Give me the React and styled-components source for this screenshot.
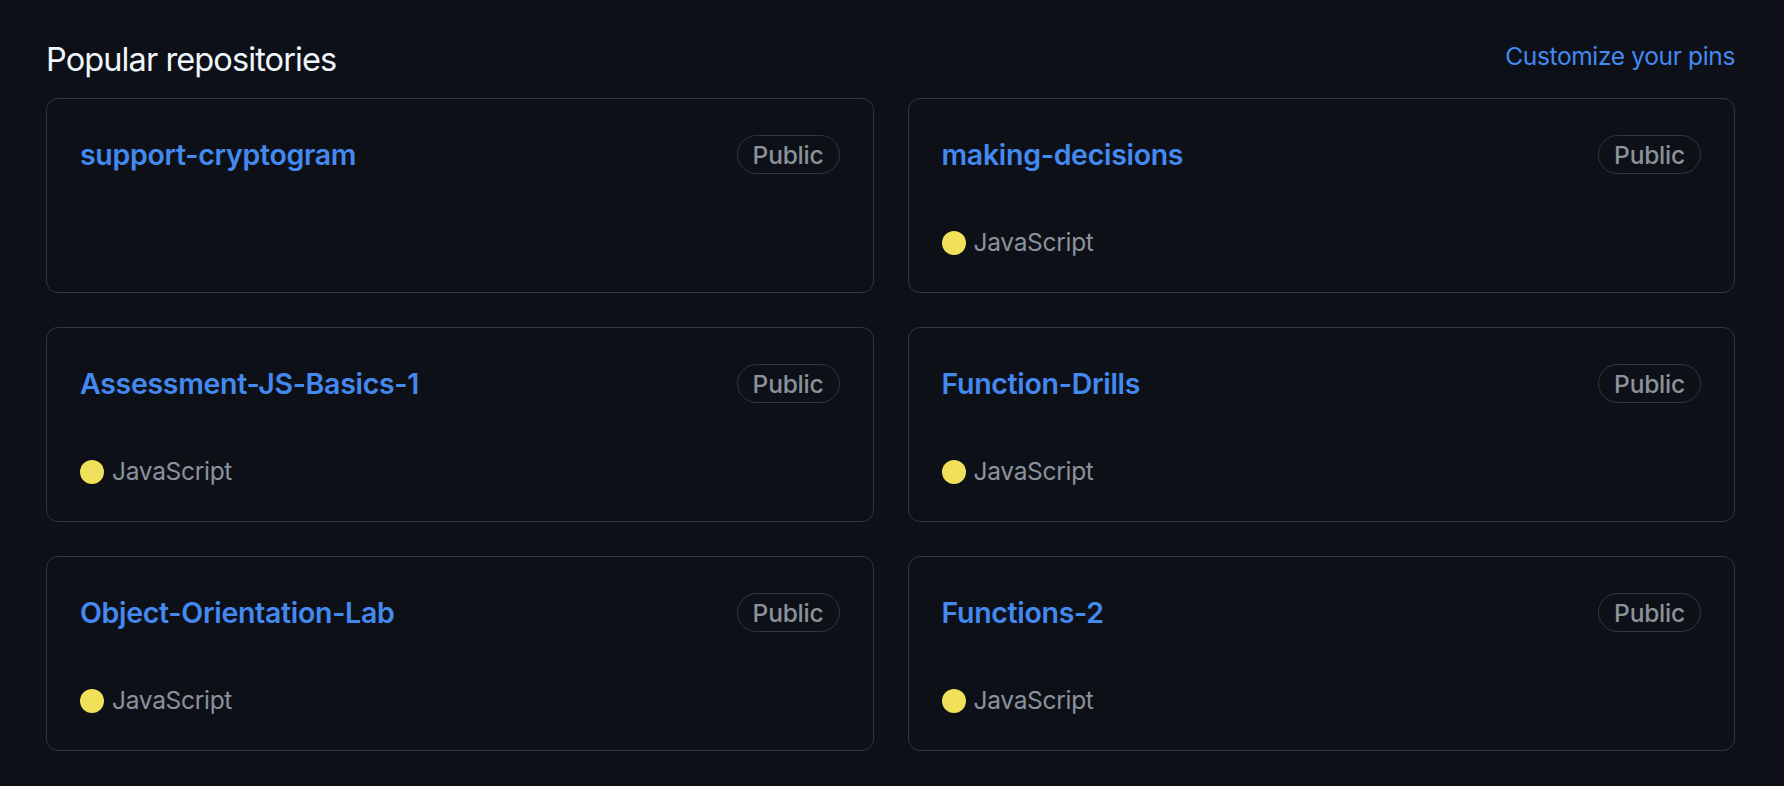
import styled, { createGlobalStyle } from "styled-components"

const repos = [
    { name: "support-cryptogram", lang: null },
    { name: "making-decisions", lang: "JavaScript" },
    { name: "Assessment-JS-Basics-1", lang: "JavaScript" },
    { name: "Function-Drills", lang: "JavaScript" },
    { name: "Object-Orientation-Lab", lang: "JavaScript" },
    { name: "Functions-2", lang: "JavaScript" },
]

const GlobalStyle = createGlobalStyle`
    body {
        margin: 0;
        background-color: #0d1117;
        font-family: Inter, "Noto Sans", "Liberation Sans", sans-serif;
    }
`

const App = () => {
    return (
        <>
            <GlobalStyle />
            <StylePage>
                <StyleHeader>
                    <h2>Popular repositories</h2>
                    <a href="#">Customize your pins</a>
                </StyleHeader>
                <StyleGrid>
                    {repos.map((repo) => (
                        <StyleCard key={repo.name}>
                            <StyleNameRow>
                                <a href="#">{repo.name}</a>
                                <StyleLabel>Public</StyleLabel>
                            </StyleNameRow>
                            {repo.lang && (
                                <StyleLang>
                                    <StyleDot color="#f1e05a" />
                                    <span>{repo.lang}</span>
                                </StyleLang>
                            )}
                        </StyleCard>
                    ))}
                </StyleGrid>
            </StylePage>
        </>
    )
}

export default App

const StylePage = styled.div`
    padding: 35px 49px 0 46px;
`

const StyleHeader = styled.div`
    display: flex;
    justify-content: space-between;
    align-items: flex-start;
    margin-bottom: 14px;

    > h2 {
        margin: 0;
        font-size: 32.5px;
        line-height: 49px;
        font-weight: 400;
        letter-spacing: -0.9px;
        color: #f0f6fc;
    }

    > a {
        padding-top: 3px;
        font-size: 24.5px;
        line-height: 37px;
        letter-spacing: -0.35px;
        color: #4489f0;
        text-decoration: none;
    }
`

const StyleGrid = styled.div`
    display: grid;
    grid-template-columns: 1fr 1fr;
    column-gap: 34px;
    row-gap: 34px;
`

const StyleCard = styled.div`
    box-sizing: border-box;
    height: 195px;
    display: flex;
    flex-direction: column;
    padding: 34px 33px 31px 33px;
    border: 1.5px solid #30363d;
    border-radius: 12px;
`

const StyleNameRow = styled.div`
    display: flex;
    align-items: center;
    justify-content: space-between;

    > a {
        font-size: 28.5px;
        line-height: 43px;
        font-weight: 600;
        letter-spacing: -0.3px;
        color: #4489f0;
        text-decoration: none;
    }
`

const StyleLabel = styled.span`
    box-sizing: border-box;
    height: 39px;
    display: inline-flex;
    align-items: center;
    padding: 0 15px;
    border: 1.5px solid #30363d;
    border-radius: 999px;
    font-size: 24.5px;
    font-weight: 500;
    letter-spacing: -0.2px;
    color: #8b929b;
`

const StyleLang = styled.p`
    margin: auto 0 0 0;
    display: flex;
    align-items: center;
    gap: 8px;
    font-size: 24.5px;
    line-height: 37px;
    letter-spacing: -0.3px;
    color: #8b929b;
`

const StyleDot = styled.span`
    width: 24px;
    height: 24px;
    border-radius: 50%;
    background-color: ${(props) => props.color};
`
